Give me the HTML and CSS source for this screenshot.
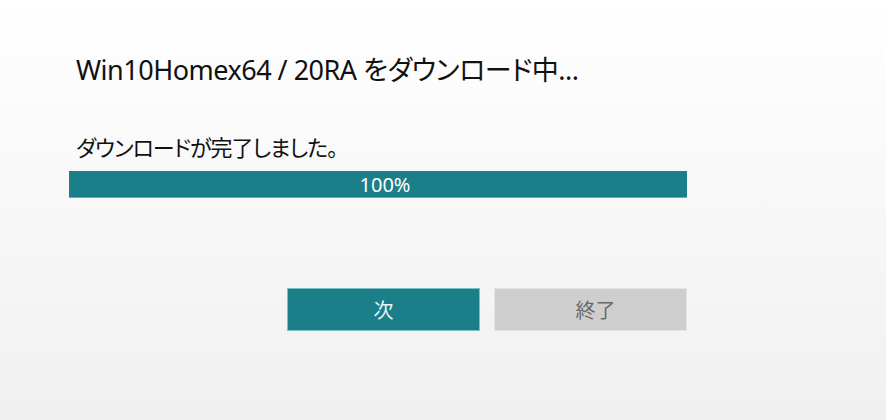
FILE: index.html
```html
<!DOCTYPE html>
<html lang="ja">
<head>
<meta charset="utf-8">
<link rel="stylesheet" href="styles.css">
</head>
<body>
<div class="page">
  <h1 class="title">Win10Homex64 / 20RA をダウンロード中...</h1>
  <div class="status">ダウンロードが完了しました。</div>
  <div class="bar"><span class="bar-text">100%</span></div>
  <div class="actions">
    <button class="btn btn-primary">次</button>
    <button class="btn btn-secondary">終了</button>
  </div>
</div>
</body>
</html>
```

FILE: styles.css
```css
html, body {
  margin: 0;
  padding: 0;
  height: 100%;
}
body {
  background: linear-gradient(to bottom, #ffffff 0%, #f9f9f9 40%, #f0f0f0 100%);
  font-family: "Noto Sans", "Noto Sans CJK JP", sans-serif;
  color: #111;
}
.page {
  width: 618px;
  padding: 48px 0 0 69px;
  display: flex;
  flex-direction: column;
}
.title {
  margin: 0 0 0 7px;
  font-weight: 400;
  font-size: 27px;
  line-height: 44px;
  font-feature-settings: "palt";
  letter-spacing: -0.5px;
}
.status {
  margin: 40px 0 0 7px;
  font-size: 22px;
  line-height: 30px;
  font-feature-settings: "palt";
  letter-spacing: -1px;
}
.bar {
  margin-top: 9px;
  height: 27px;
  background: #1b7f8a;
  border-bottom: 1px solid #5fb3bb;
  box-sizing: border-box;
  display: flex;
  align-items: center;
  justify-content: center;
}
.bar-text {
  color: #fff;
  font-size: 20px;
  line-height: 27px;
  padding-left: 14px;
}
.actions {
  margin-top: 90px;
  display: flex;
  justify-content: flex-end;
  gap: 14px;
}
.btn {
  width: 193px;
  height: 43px;
  border: 1px solid transparent;
  font-family: "Noto Sans CJK JP", sans-serif;
  font-size: 20px;
  padding: 0;
}
.btn-primary {
  background: #1b7f8a;
  border-color: #7cc1c7;
  color: #e8f4f5;
}
.btn-secondary {
  background: #cecece;
  border-color: #e4e4e4;
  color: #6a6a6a;
  padding-left: 10px;
}
```
